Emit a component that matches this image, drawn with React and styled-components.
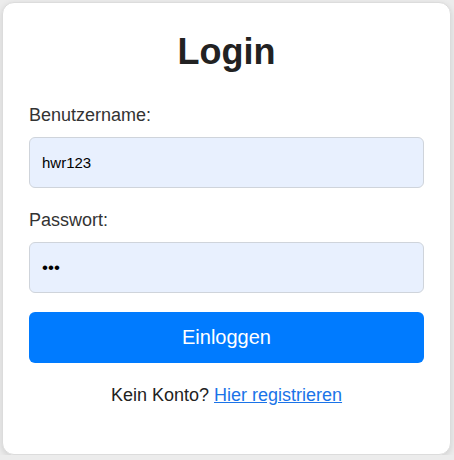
import React, { useState } from 'react';
import styled, { createGlobalStyle } from 'styled-components';

const GlobalStyle = createGlobalStyle`
  html, body {
    margin: 0;
    padding: 0;
    background: #ececec;
    font-family: 'Liberation Sans', Arial, sans-serif;
  }
  * {
    box-sizing: border-box;
  }
`;

const Page = styled.div`
  padding: 2px 3px 0 2px;
`;

const Card = styled.div`
  background: #fff;
  border: 1px solid #dcdcdc;
  border-radius: 12px;
  box-shadow: 0 2px 6px rgba(0, 0, 0, 0.12);
  padding: 27px 26px 48px;
  height: 453px;
`;

const Title = styled.h1`
  margin: 0 0 32px;
  text-align: center;
  font-size: 36px;
  line-height: 43px;
  font-weight: 700;
  color: #222;
`;

const Field = styled.div`
  margin-bottom: ${p => p.$last ? '19px' : '22px'};
`;

const Label = styled.label`
  display: block;
  font-size: 18px;
  line-height: 21px;
  color: #333;
  margin-bottom: 11px;
`;

const Input = styled.input`
  display: block;
  width: 100%;
  height: 51px;
  padding: 0 12px;
  border: 1px solid #cfd4db;
  border-radius: 6px;
  background: #e8f0fe;
  font-family: 'Liberation Sans', Arial, sans-serif;
  font-size: ${p => p.type === 'password' ? '17px' : '15px'};
  color: #000;
  outline: none;
`;

const Button = styled.button`
  display: block;
  width: 100%;
  height: 51px;
  border: none;
  border-radius: 6px;
  background: #007bff;
  color: #fff;
  font-family: 'Liberation Sans', Arial, sans-serif;
  font-size: 20px;
  cursor: pointer;
`;

const Footer = styled.p`
  margin: 22px 0 0;
  text-align: center;
  font-size: 18px;
  line-height: 21px;
  color: #222;
`;

const Link = styled.a`
  color: #1a73e8;
  text-decoration: underline;
`;

export default function App() {
  const [form, setForm] = useState({ username: 'hwr123', password: 'abc' });

  const onChange = e => {
    setForm({ ...form, [e.target.name]: e.target.value });
  };

  return (
    <>
      <GlobalStyle />
      <Page>
        <Card>
          <Title>Login</Title>
          <form onSubmit={e => e.preventDefault()}>
            <Field>
              <Label htmlFor='username'>Benutzername:</Label>
              <Input
                id='username'
                type='text'
                name='username'
                value={form.username}
                onChange={onChange}
              />
            </Field>
            <Field $last>
              <Label htmlFor='password'>Passwort:</Label>
              <Input
                id='password'
                type='password'
                name='password'
                value={form.password}
                onChange={onChange}
              />
            </Field>
            <Button type='submit'>Einloggen</Button>
          </form>
          <Footer>
            Kein Konto? <Link href='#'>Hier registrieren</Link>
          </Footer>
        </Card>
      </Page>
    </>
  );
}
